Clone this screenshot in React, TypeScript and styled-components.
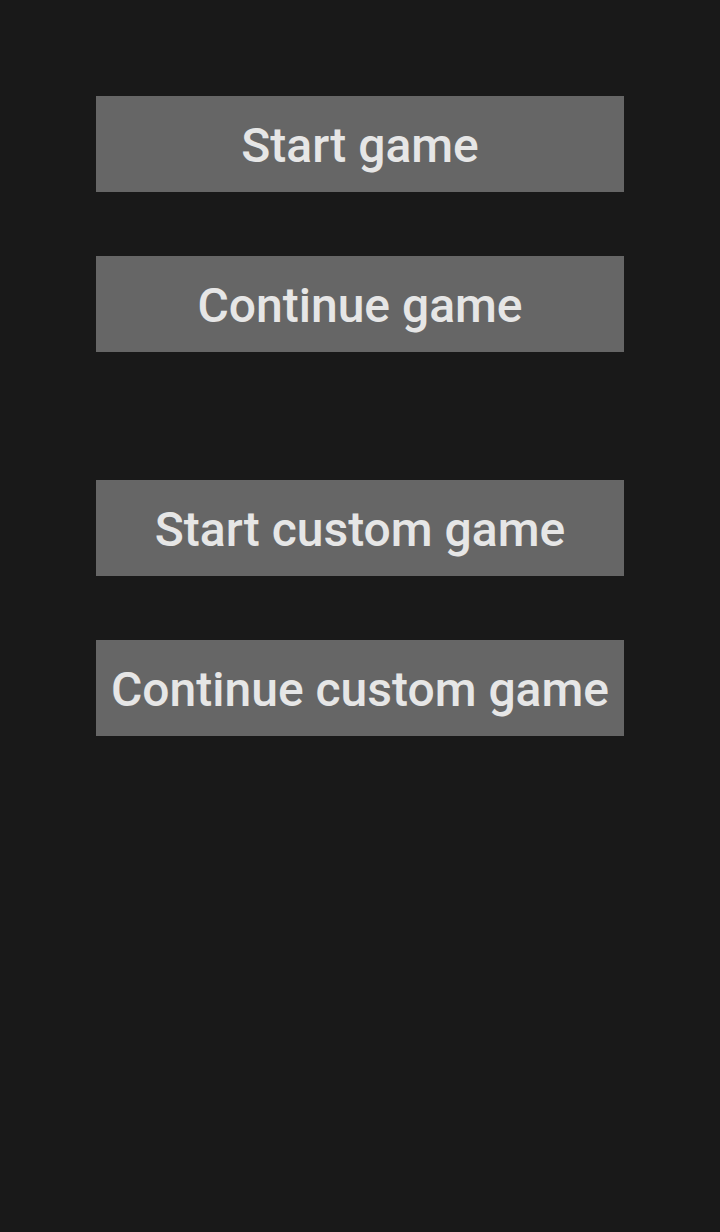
import React from "react";
import styled, { createGlobalStyle } from "styled-components";

const GlobalStyle = createGlobalStyle`
  html, body {
    margin: 0;
    padding: 0;
    background-color: #191919;
  }
  #root {
    min-height: 100vh;
  }
`;

const Screen = styled.main`
  min-height: 100vh;
  box-sizing: border-box;
  background-color: #191919;
  padding: 96px 96px 0;
  display: flex;
  flex-direction: column;
`;

const Group = styled.div`
  display: flex;
  flex-direction: column;
  gap: 64px;
  & + & {
    margin-top: 128px;
  }
`;

const MenuButton = styled.button`
  height: 96px;
  width: 100%;
  border: none;
  border-radius: 0;
  padding: 4px 0 0;
  background-color: #666666;
  color: #e6e6e6;
  font-family: Roboto, "Noto Sans", sans-serif;
  font-weight: 500;
  font-size: 48px;
  line-height: 92px;
  text-align: center;
  white-space: nowrap;
  cursor: pointer;
`;

const App = () => {
  return (
    <>
      <GlobalStyle />
      <Screen>
        <Group>
          <MenuButton>Start game</MenuButton>
          <MenuButton>Continue game</MenuButton>
        </Group>
        <Group>
          <MenuButton>Start custom game</MenuButton>
          <MenuButton>Continue custom game</MenuButton>
        </Group>
      </Screen>
    </>
  );
};

export default App;
